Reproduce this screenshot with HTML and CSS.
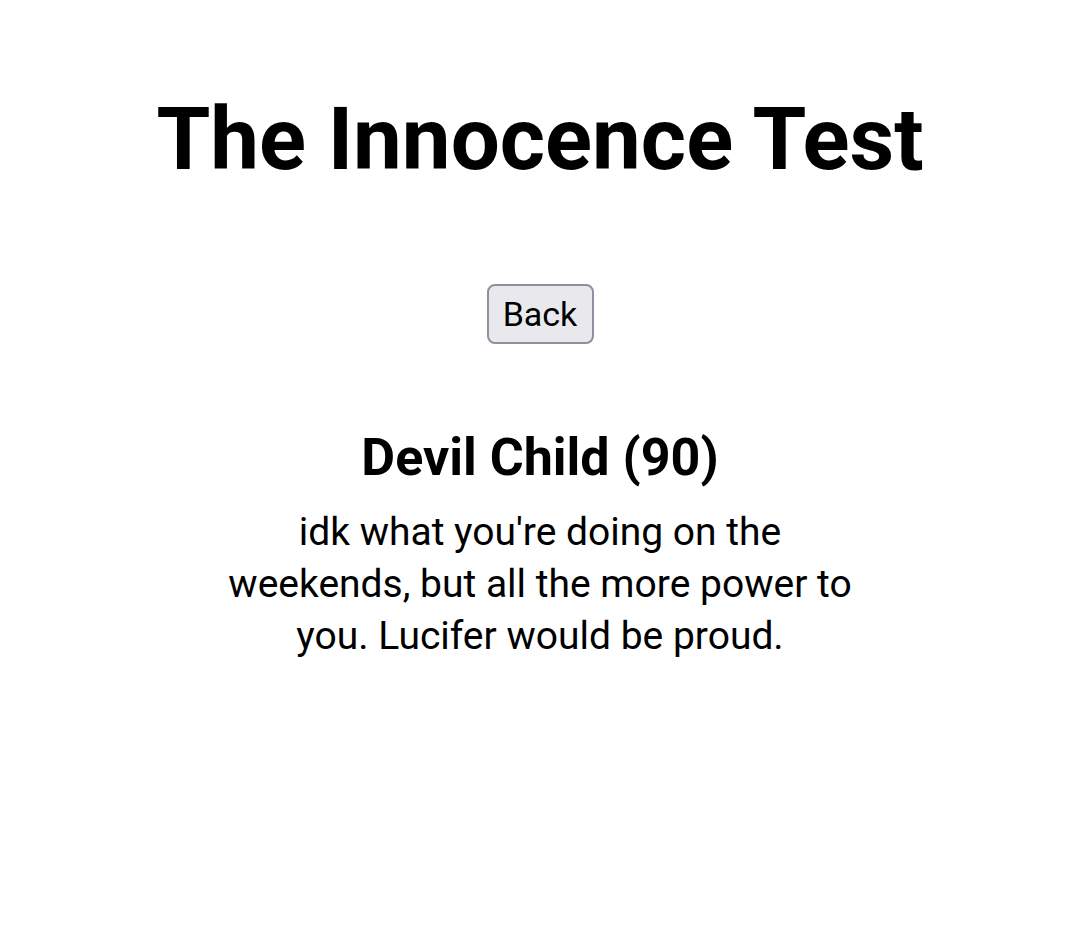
FILE: index.html
```html
<!DOCTYPE html>
<html>
<head>
  <link rel="stylesheet" href="styles.css">
</head>
<body>
  <div class="page">
    <h1 class="title">The Innocence Test</h1>
    <button class="back-button">Back</button>
    <div class="result">
      <h2 class="result-title">Devil Child (90)</h2>
      <p class="result-text">idk what you're doing on the weekends, but all the more power to you. Lucifer would be proud.</p>
    </div>
  </div>
</body>
</html>
```

FILE: styles.css
```css
* {
  box-sizing: border-box;
  margin: 0;
  padding: 0;
}

body {
  background-color: #fff;
  color: #000;
  font-family: Roboto, "Noto Sans", sans-serif;
}

.page {
  display: flex;
  flex-direction: column;
  align-items: center;
  text-align: center;
  padding-top: 85px;
}

.title {
  font-size: 87px;
  font-weight: 700;
  line-height: 108px;
}

.back-button {
  margin-top: 91px;
  width: 107px;
  height: 60px;
  font-family: Roboto, sans-serif;
  font-size: 34px;
  color: #000;
  background-color: #e9e9ed;
  border: 2px solid #8f8f9d;
  border-radius: 8px;
}

.result {
  margin-top: 84px;
  width: 640px;
}

.result-title {
  font-size: 52px;
  font-weight: 700;
  line-height: 60px;
}

.result-text {
  margin-top: 18px;
  font-size: 39px;
  line-height: 52px;
}
```
